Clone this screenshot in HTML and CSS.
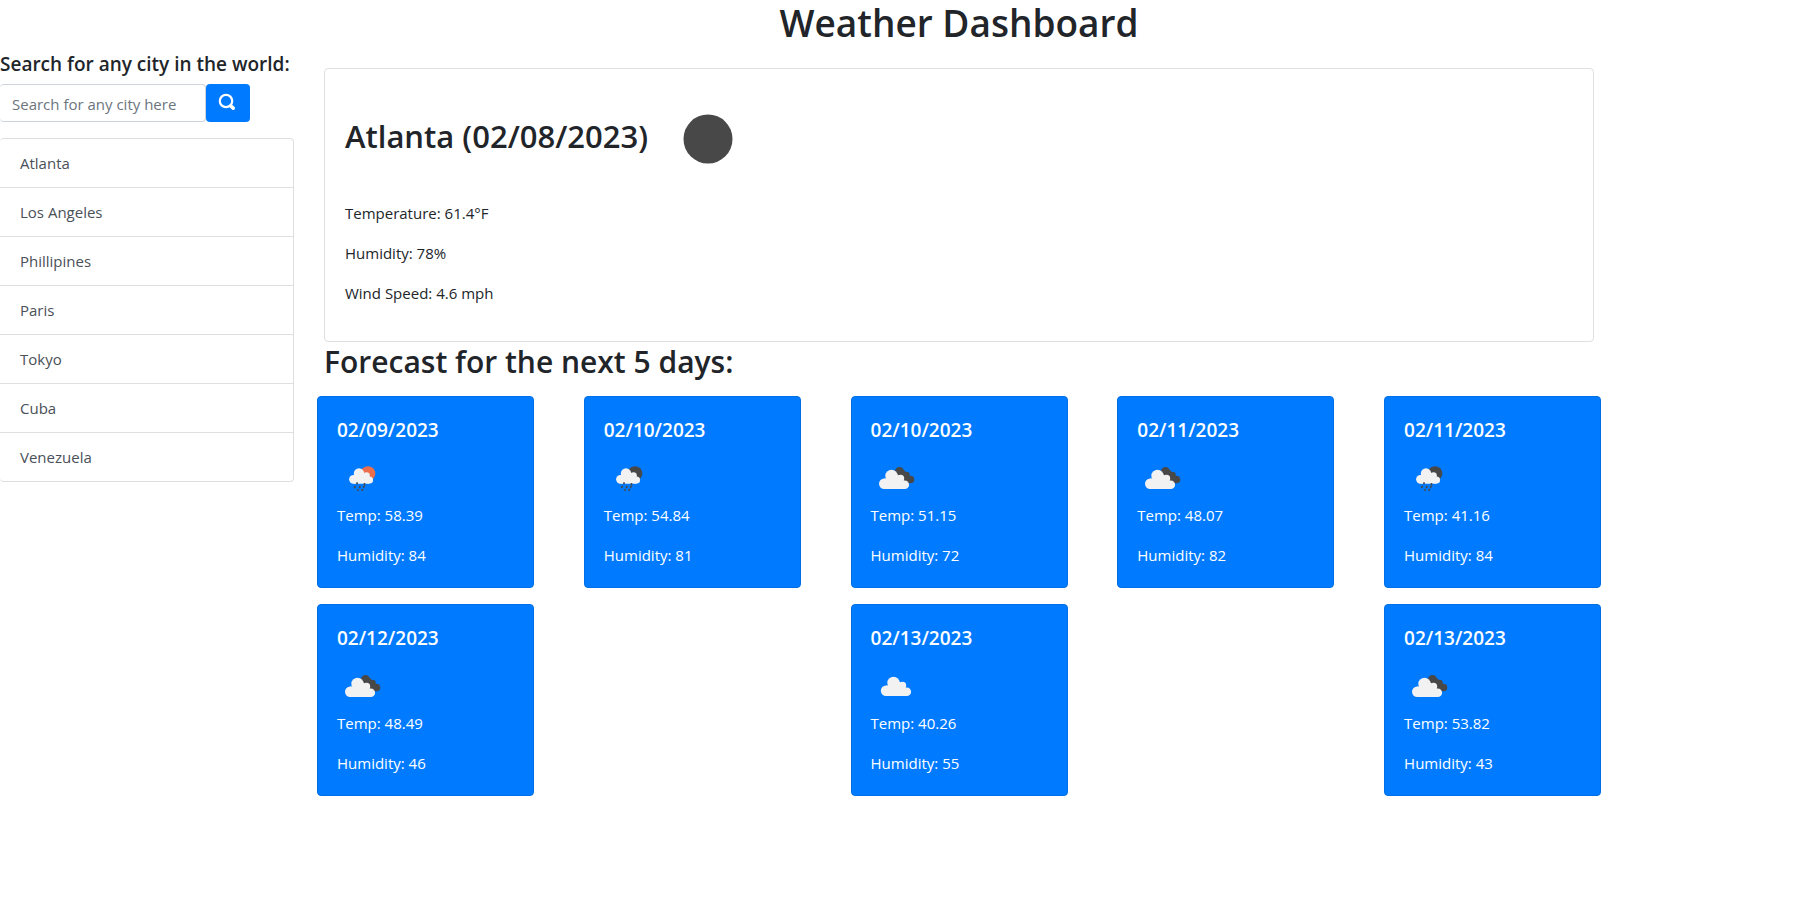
FILE: index.html
```html
<!DOCTYPE html>
<html lang="en">
<head>
<meta charset="utf-8">
<title>Weather Dashboard</title>
<link rel="stylesheet" href="styles.css">
</head>
<body>
<svg class="sprite" aria-hidden="true">
  <symbol id="cloud" viewBox="0 0 50 50">
    <g fill="#f2f2f2"><circle cx="22.500" cy="22" r="6.200"/><circle cx="31.500" cy="24.500" r="3.700"/><circle cx="15" cy="29.800" r="5.200"/><circle cx="35.800" cy="30.700" r="4.300"/><path d="M15 24.600h4l9 -4 6 4 2 6v4.400H15z"/></g>
  </symbol>
  <symbol id="clouds" viewBox="0 0 50 50">
    <g fill="#484849"><circle cx="28.500" cy="18.800" r="4.700"/><circle cx="35.500" cy="22" r="3.300"/><circle cx="39.500" cy="26.500" r="3.800"/><path d="M24 18l9-1 5 6 1 7-6 1z"/></g>
    <g fill="#f2f2f2"><circle cx="20.500" cy="23" r="6.200"/><circle cx="29.500" cy="25.500" r="3.700"/><circle cx="13.200" cy="30.800" r="5.200"/><circle cx="33.800" cy="31.700" r="4.300"/><path d="M13 25.600h4l9 -4 6 4 2 6v4.400H13z"/></g>
  </symbol>
  <symbol id="rain" viewBox="0 0 50 50">
    <circle cx="31" cy="20.500" r="7.300" fill="currentColor"/>
    <g fill="#f2f2f2"><circle cx="22" cy="20.500" r="5.200"/><circle cx="29.500" cy="22.500" r="3.300"/><circle cx="16.500" cy="26.300" r="4.400"/><circle cx="32.500" cy="27" r="3.600"/><path d="M16.500 21.900h3l6-3 6 3.500 1 5v3.300h-16z"/></g>
    <path d="M20 29.200v2M27.500 30v2.500M18.500 32.800l-1.200 2.400M23.300 32.800l-1 2.400M27.300 32.800l-.9 2M21.300 36.200l-.7 1.700M25.700 35.800l-.9 2" fill="none" stroke="#484849" stroke-width="1.600"/>
  </symbol>
</svg>
<div class="layout">
  <aside class="sidebar">
    <form class="search">
      <label class="search-label" for="city">Search for any city in the world:</label>
      <div class="search-row">
        <input class="search-input" id="city" type="text" placeholder="Search for any city here">
        <button class="search-button" type="button" aria-label="Search">
          <svg width="18" height="18" viewBox="0 0 18 18" fill="none" stroke="#fff"><circle cx="8" cy="8" r="6.200" stroke-width="2.200"/><path d="M12.800 13l2.400 2.200" stroke-width="3.600" stroke-linecap="round"/></svg>
        </button>
      </div>
    </form>
    <ul class="cities">
      <li><button type="button">Atlanta</button></li>
      <li><button type="button">Los Angeles</button></li>
      <li><button type="button">Phillipines</button></li>
      <li><button type="button">Paris</button></li>
      <li><button type="button">Tokyo</button></li>
      <li><button type="button">Cuba</button></li>
      <li><button type="button">Venezuela</button></li>
    </ul>
  </aside>
  <main class="main">
    <h1 class="title">Weather Dashboard</h1>
    <section class="current">
      <div class="current-head">
        <h2>Atlanta (02/08/2023)</h2>
        <svg class="sky" viewBox="0 0 100 100" role="img" aria-label="Clear night"><circle cx="50" cy="50" r="24.500" fill="#484849"/></svg>
      </div>
      <p>Temperature: 61.4°F</p>
      <p>Humidity: 78%</p>
      <p>Wind Speed: 4.6 mph</p>
    </section>
    <h2 class="forecast-title">Forecast for the next 5 days:</h2>
    <section class="forecast">
      <article class="day"><h3>02/09/2023</h3><svg class="icon sunny"><use href="#rain"/></svg><p>Temp: 58.39</p><p>Humidity: 84</p></article>
      <article class="day"><h3>02/10/2023</h3><svg class="icon"><use href="#rain"/></svg><p>Temp: 54.84</p><p>Humidity: 81</p></article>
      <article class="day"><h3>02/10/2023</h3><svg class="icon"><use href="#clouds"/></svg><p>Temp: 51.15</p><p>Humidity: 72</p></article>
      <article class="day"><h3>02/11/2023</h3><svg class="icon"><use href="#clouds"/></svg><p>Temp: 48.07</p><p>Humidity: 82</p></article>
      <article class="day"><h3>02/11/2023</h3><svg class="icon"><use href="#rain"/></svg><p>Temp: 41.16</p><p>Humidity: 84</p></article>
      <article class="day"><h3>02/12/2023</h3><svg class="icon"><use href="#clouds"/></svg><p>Temp: 48.49</p><p>Humidity: 46</p></article>
      <article class="day"><h3>02/13/2023</h3><svg class="icon"><use href="#cloud"/></svg><p>Temp: 40.26</p><p>Humidity: 55</p></article>
      <article class="day"><h3>02/13/2023</h3><svg class="icon"><use href="#clouds"/></svg><p>Temp: 53.82</p><p>Humidity: 43</p></article>
    </section>
  </main>
</div>
</body>
</html>
```
FILE: styles.css
```css
*, *::before, *::after { box-sizing: border-box; }
body { margin: 0; background: #fff; color: #212529; font-family: "Open Sans", "Noto Sans", sans-serif; font-size: 15px; line-height: 24px; }
h1, h2, h3, p, ul { margin: 0; padding: 0; }
h1, h2, h3 { font-weight: 600; }
h2 { font-size: 30px; line-height: 40px; }
button, input { font: inherit; }
.sprite { position: absolute; width: 0; height: 0; }

.layout { display: flex; align-items: flex-start; }
.sidebar { width: 17.1%; padding: 52px 15px 0 0; }
.search { margin-bottom: 16px; }
.search-label { display: block; margin-bottom: 8px; font-size: 19px; font-weight: 600; line-height: 24px; white-space: nowrap; }
.search-row { display: flex; }
.search-input { width: 70%; height: 38px; padding: 7px 12px 5px; border: 1px solid #ced4da; border-left: 0; border-radius: 4px; color: #495057; }
.search-input::placeholder { color: #6c757d; opacity: 1; }
.search-button { width: 44px; height: 38px; padding: 9px 12px 11px; border: 0; border-radius: 4px; background: #007bff; }
.search-button svg { display: block; }
.cities { list-style: none; border: 1px solid #dfdfdf; border-left: 0; border-radius: 4px; }
.cities li + li { border-top: 1px solid #dfdfdf; }
.cities button { display: block; width: 100%; padding: 12px 20px; border: 0; background: none; color: #495057; text-align: left; line-height: 24px; }

.main { width: 71.95%; padding: 0 15px; }
.title { margin-bottom: 22px; font-size: 37px; line-height: 46px; text-align: center; }
.current { padding: 20px; border: 1px solid #dfdfdf; border-radius: 4px; }
.current p, .day p { margin-bottom: 16px; }
.current-head { display: flex; align-items: center; gap: 10px; margin-bottom: 12px; }
.current-head h2 { padding-bottom: 6px; font-size: 31px; }
.sky { width: 100px; height: 100px; }
.forecast-title { margin-bottom: 14px; }
.forecast { display: flex; flex-wrap: wrap; justify-content: space-between; row-gap: 16px; margin: 0 -7px; }
.day { width: 16.9%; padding: 19px 19px 4px; border: 1px solid #006fe6; border-radius: 4px; background: #007bff; color: #fff; }
.day h3 { margin-bottom: 9px; font-size: 19px; line-height: 28px; }
.icon { display: block; width: 50px; height: 50px; color: #484849; }
.sunny { color: #ec6e4c; }
```
